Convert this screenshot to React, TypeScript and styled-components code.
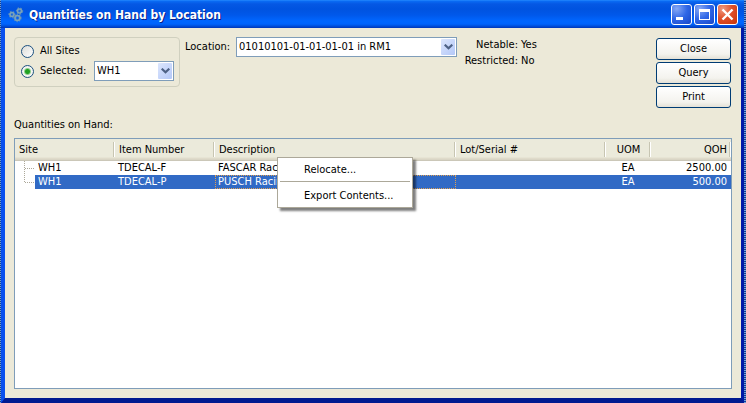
import React from "react";
import styled, { createGlobalStyle, css } from "styled-components";

const GlobalStyle = createGlobalStyle`
  * { box-sizing: border-box; }
  body { margin: 0; background: #0a3fb0; }
  body, button, select, table {
    font-family: "DejaVu Sans Condensed", "Noto Sans", sans-serif;
    font-size: 11px;
    line-height: 14px;
    color: #000;
  }
`;

const Desktop = styled.div`
  min-height: 100vh;
  display: flex;
  padding: 0 2px 0 1px;
  background: repeating-linear-gradient(180deg, #6f9fd8 0 1px, #123c94 1px 2px);
`;

const Window = styled.section`
  flex: 1;
  min-width: 0;
  display: flex;
  flex-direction: column;
  border: solid;
  border-width: 0 3px 5px 4px;
  border-color: #0831d9 #0019a8 #001a90 #0a50ee;
  background: #ece9d8;
`;

const TitleBar = styled.header`
  height: 28px;
  display: flex;
  align-items: center;
  gap: 5px;
  margin: 0 -3px 0 -4px;
  padding: 1px 6px 0 7px;
  background: linear-gradient(
    180deg,
    #2b90ff 0,
    #0a6cf5 1px,
    #0558e4 4px,
    #0053e0 9px,
    #0058ea 15px,
    #0066ff 21px,
    #0064fc 24px,
    #0050dd 26px,
    #0036b8 28px
  );
`;

const Title = styled.h1`
  flex: 1;
  margin: 0;
  font-size: 12px;
  line-height: 18px;
  font-weight: bold;
  color: #fff;
  text-shadow: 1px 1px #0a1f86;
  white-space: nowrap;
`;

const CaptionButtons = styled.div`
  display: flex;
  gap: 2px;
`;

const CaptionButton = styled.button<{ $danger?: boolean }>`
  width: 21px;
  height: 21px;
  padding: 0;
  display: flex;
  border: 1px solid #fff;
  border-radius: 3px;
  background: ${(p) =>
    p.$danger
      ? "radial-gradient(circle at 25% 20%, #f09a80, #e0512c 45%, #c83408 100%)"
      : "radial-gradient(circle at 25% 20%, #86a8f5, #2f66e6 50%, #1746c8 100%)"};
`;

const Content = styled.main`
  flex: 1;
  display: flex;
  flex-direction: column;
  padding: 9px;
`;

const Criteria = styled.div`
  display: flex;
  align-items: flex-start;
  min-height: 81px;
`;

const SiteGroup = styled.fieldset`
  width: 166px;
  margin: 0 5px 0 0;
  padding: 4px 5px 5px 6px;
  border: 1px solid #d0d0bf;
  border-radius: 4px;
`;

const SiteRow = styled.div`
  height: 20px;
  display: flex;
  align-items: center;
  justify-content: space-between;
  &:first-of-type { height: 18px; margin-bottom: 1px; }
`;

const RadioLabel = styled.label`
  display: flex;
  align-items: center;
  gap: 6px;
`;

const Radio = styled.input`
  appearance: none;
  width: 13px;
  height: 13px;
  margin: 0;
  border: 1px solid #1c5180;
  border-radius: 50%;
  background: linear-gradient(135deg, #dcdcd7, #fff);
  &:checked {
    background: radial-gradient(circle, #21a121 0 2px, #8fd08f 3px, #f4f4f0 4px);
  }
`;

const Combo = styled.span<{ $width: number }>`
  position: relative;
  display: inline-flex;
  width: ${(p) => p.$width}px;
  height: 20px;
`;

const Select = styled.select`
  appearance: none;
  width: 100%;
  padding: 0 20px 0 2px;
  border: 1px solid #7f9db9;
  border-radius: 0;
  background: #fff;
`;

const Drop = styled.span`
  position: absolute;
  top: 2px;
  right: 2px;
  width: 14px;
  height: 16px;
  display: flex;
  align-items: center;
  justify-content: center;
  border-radius: 1px;
  pointer-events: none;
  background: linear-gradient(135deg, #dce6fd, #b4c8f8);
`;

const LocationField = styled.div`
  display: flex;
  align-items: center;
  label { width: 51px; }
`;

const Flags = styled.dl`
  display: grid;
  grid-template-columns: 56px auto;
  column-gap: 3px;
  margin: 0 0 0 5px;
  line-height: 16px;
  dt { text-align: right; }
  dd { margin: 0; }
`;

const Actions = styled.div`
  margin-left: auto;
  padding: 1px 1px 0 0;
  display: flex;
  flex-direction: column;
  gap: 2px;
`;

const PushButton = styled.button`
  width: 75px;
  height: 22px;
  padding: 0;
  border: 1px solid #003c74;
  border-radius: 3px;
  background: linear-gradient(180deg, #fff, #f4f3ee 75%, #e4e1d6);
`;

const ListLabel = styled.h2`
  margin: 0 0 6px;
  font-size: 11px;
  line-height: 14px;
  font-weight: normal;
`;

const ListPanel = styled.div`
  position: relative;
  flex: 1;
  border: 1px solid #7f9db9;
  background: #fff;
`;

const Table = styled.table`
  width: 100%;
  table-layout: fixed;
  border-collapse: separate;
  border-spacing: 0;
`;

type Align = "left" | "center" | "right";

const HeadCell = styled.th<{ $align?: Align }>`
  height: 22px;
  padding: 0 4px;
  font-weight: normal;
  text-align: ${(p) => p.$align ?? "left"};
  border-bottom: 1px solid #cbc7b8;
  background:
    linear-gradient(#fff, #fff) right 0 top 3px / 1px 15px no-repeat,
    linear-gradient(#c7c5b2, #c7c5b2) right 1px top 3px / 1px 15px no-repeat,
    linear-gradient(180deg, #ebeadb 0 18px, #e2decd 19px, #d6d2c2 21px);
`;

const focusMark = css`
  outline: 1px dotted #e0a050;
  outline-offset: -1px;
`;

const Cell = styled.td<{ $align?: Align; $focused?: boolean }>`
  height: 14px;
  padding: 0 4px 0 3px;
  text-align: ${(p) => p.$align ?? "left"};
  white-space: nowrap;
  overflow: hidden;
  ${(p) => p.$focused && focusMark}
`;

const Row = styled.tr<{ $selected?: boolean }>`
  color: ${(p) => (p.$selected ? "#fff" : "#000")};
  background: ${(p) => (p.$selected ? "#316ac5" : "#fff")};
`;

const SiteCell = styled(Cell)`
  padding: 0;
`;

const Branch = styled.span`
  display: flex;
  svg { flex: none; background: #fff; margin-right: 3px; }
`;

const Menu = styled.div`
  position: absolute;
  top: 18px;
  left: 262px;
  width: 136px;
  padding: 2px 2px 1px;
  border: 1px solid #aca899;
  background: #fff;
  box-shadow: 3px 3px 2px rgba(0, 0, 0, 0.5);
`;

const MenuItem = styled.button`
  display: block;
  width: 100%;
  height: 20px;
  padding: 0 0 0 24px;
  border: 0;
  background: none;
  text-align: left;
`;

const MenuRule = styled.hr`
  height: 1px;
  margin: 1px 0 4px;
  border: 0;
  background: #aca899;
`;

const gears = [
  { cx: 4, cy: 7.5, r: 2 },
  { cx: 11.5, cy: 4, r: 2 },
  { cx: 9.5, cy: 11, r: 2.5 },
];

const GearsIcon = () => (
  <svg width="16" height="16" viewBox="0 0 16 16" fill="none" aria-hidden="true">
    {gears.map((gear) => (
      <g key={gear.cx}>
        <circle {...gear} stroke="#4f86c2" strokeWidth="3.4" strokeDasharray="1 0.8" />
        <circle {...gear} stroke="#7ba3b8" strokeWidth="1.6" />
      </g>
    ))}
  </svg>
);

const Chevron = () => (
  <Drop>
    <svg width="9" height="6" viewBox="0 0 9 6" aria-hidden="true">
      <path d="M0.7 0.7L4.5 4.3L8.3 0.7" fill="none" stroke="#4d6185" strokeWidth="2.2" />
    </svg>
  </Drop>
);

const BranchLines = ({ last }: { last: boolean }) => (
  <svg width="20" height="14" viewBox="0 0 20 14" aria-hidden="true">
    <path
      d={last ? "M9.5 0V8M10 7.5H20" : "M9.5 0V14M10 7.5H20"}
      stroke="#aca899"
      strokeDasharray="1 1"
      fill="none"
    />
  </svg>
);

const rows = [
  { site: "WH1", item: "TDECAL-F", description: "FASCAR Racing", lot: "", uom: "EA", qoh: "2500.00" },
  { site: "WH1", item: "TDECAL-P", description: "PUSCH Racing", lot: "", uom: "EA", qoh: "500.00" },
];

export default function App() {
  return (
    <>
      <GlobalStyle />
      <Desktop>
        <Window>
          <TitleBar>
            <GearsIcon />
            <Title>Quantities on Hand by Location</Title>
            <CaptionButtons>
              <CaptionButton aria-label="Minimize">
                <svg width="19" height="19" viewBox="0 0 19 19">
                  <path d="M4 12H11V15H4Z" fill="#fff" />
                </svg>
              </CaptionButton>
              <CaptionButton aria-label="Maximize">
                <svg width="19" height="19" viewBox="0 0 19 19">
                  <path d="M4 4H15V15H4ZM5 7V14H14V7Z" fill="#fff" fillRule="evenodd" />
                </svg>
              </CaptionButton>
              <CaptionButton $danger aria-label="Close window">
                <svg width="19" height="19" viewBox="0 0 19 19">
                  <path d="M4.5 4.5L14.5 14.5M14.5 4.5L4.5 14.5" stroke="#fff" strokeWidth="2.4" />
                </svg>
              </CaptionButton>
            </CaptionButtons>
          </TitleBar>
          <Content>
            <Criteria>
              <SiteGroup aria-label="Site">
                <SiteRow>
                  <RadioLabel>
                    <Radio type="radio" name="site" />
                    All Sites
                  </RadioLabel>
                </SiteRow>
                <SiteRow>
                  <RadioLabel>
                    <Radio type="radio" name="site" defaultChecked />
                    Selected:
                  </RadioLabel>
                  <Combo $width={80}>
                    <Select aria-label="Selected site">
                      <option>WH1</option>
                    </Select>
                    <Chevron />
                  </Combo>
                </SiteRow>
              </SiteGroup>
              <LocationField>
                <label htmlFor="location">Location:</label>
                <Combo $width={221}>
                  <Select id="location">
                    <option>01010101-01-01-01-01 in RM1</option>
                  </Select>
                  <Chevron />
                </Combo>
              </LocationField>
              <Flags>
                <dt>Netable:</dt>
                <dd>Yes</dd>
                <dt>Restricted:</dt>
                <dd>No</dd>
              </Flags>
              <Actions>
                <PushButton>Close</PushButton>
                <PushButton>Query</PushButton>
                <PushButton>Print</PushButton>
              </Actions>
            </Criteria>
            <ListLabel id="qoh-label">Quantities on Hand:</ListLabel>
            <ListPanel>
              <Table aria-labelledby="qoh-label">
                <colgroup>
                  <col width="100" />
                  <col width="100" />
                  <col />
                  <col width="150" />
                  <col width="45" />
                  <col width="80" />
                </colgroup>
                <thead>
                  <tr>
                    <HeadCell>Site</HeadCell>
                    <HeadCell>Item Number</HeadCell>
                    <HeadCell>Description</HeadCell>
                    <HeadCell>Lot/Serial #</HeadCell>
                    <HeadCell $align="center">UOM</HeadCell>
                    <HeadCell $align="right">QOH</HeadCell>
                  </tr>
                </thead>
                <tbody>
                  {rows.map((row, index) => {
                    const last = index === rows.length - 1;
                    return (
                      <Row key={row.item} $selected={last}>
                        <SiteCell>
                          <Branch>
                            <BranchLines last={last} />
                            {row.site}
                          </Branch>
                        </SiteCell>
                        <Cell>{row.item}</Cell>
                        <Cell $focused={last}>{row.description}</Cell>
                        <Cell>{row.lot}</Cell>
                        <Cell $align="center">{row.uom}</Cell>
                        <Cell $align="right">{row.qoh}</Cell>
                      </Row>
                    );
                  })}
                </tbody>
              </Table>
              <Menu role="menu">
                <MenuItem role="menuitem">Relocate...</MenuItem>
                <MenuRule />
                <MenuItem role="menuitem">Export Contents...</MenuItem>
              </Menu>
            </ListPanel>
          </Content>
        </Window>
      </Desktop>
    </>
  );
}
